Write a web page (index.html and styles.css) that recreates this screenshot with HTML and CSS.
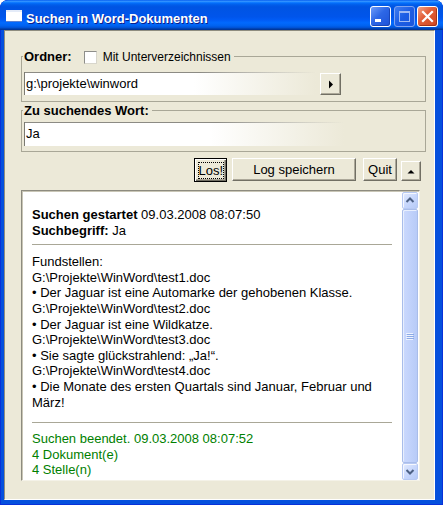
FILE: index.html
```html
<!DOCTYPE html>
<html lang="de">
<head>
<meta charset="utf-8">
<title>Suchen in Word-Dokumenten</title>
<link rel="stylesheet" href="styles.css">
</head>
<body>
<div class="window">
  <div class="titlebar">
    <span class="app-icon"></span>
    <span class="title">Suchen in Word-Dokumenten</span>
    <div class="caption-buttons">
      <span class="cap-btn cap-min"><svg width="19" height="19" viewBox="0 0 19 19"><rect x="4" y="12" width="6" height="3" fill="#fff"/></svg></span>
      <span class="cap-btn cap-max"><svg width="19" height="19" viewBox="0 0 19 19"><rect x="4.5" y="4.5" width="10" height="10" fill="none" stroke="#9fbaf3" stroke-width="1"/><rect x="4" y="4" width="11" height="2" fill="#9fbaf3"/></svg></span>
      <span class="cap-btn cap-close"><svg width="19" height="19" viewBox="0 0 19 19"><path d="M5 5 L14 14 M14 5 L5 14" stroke="#fff" stroke-width="2.2" stroke-linecap="square"/></svg></span>
    </div>
  </div>
  <div class="client">
    <fieldset class="group group-folder">
      <legend class="group-label"><span class="label-bold">Ordner:</span><span class="checkbox"></span><span class="check-label">Mit Unterverzeichnissen</span></legend>
      <div class="folder-row">
        <div class="field field-folder">g:\projekte\winword</div>
        <span class="btn btn-browse"><svg width="6" height="9" viewBox="0 0 6 9"><path d="M1 0.5 L5 4.5 L1 8.5 Z" fill="#000"/></svg></span>
      </div>
    </fieldset>
    <fieldset class="group group-word">
      <legend class="group-label"><span class="label-bold">Zu suchendes Wort:</span></legend>
      <div class="field field-word">Ja</div>
    </fieldset>
    <div class="actions">
      <span class="btn btn-go"><span class="focus">Los!</span></span>
      <span class="btn btn-save">Log speichern</span>
      <span class="btn btn-quit">Quit</span>
      <span class="btn btn-up"><svg width="8" height="5" viewBox="0 0 8 5"><path d="M0.5 4.5 L4 1 L7.5 4.5 Z" fill="#000"/></svg></span>
    </div>
    <div class="log">
      <div class="log-text">
        <div><b>Suchen gestartet</b> 09.03.2008 08:07:50</div>
        <div><b>Suchbegriff:</b> Ja</div>
        <div class="rule"></div>
        <div>Fundstellen:</div>
        <div>G:\Projekte\WinWord\test1.doc</div>
        <div>• Der Jaguar ist eine Automarke der gehobenen Klasse.</div>
        <div>G:\Projekte\WinWord\test2.doc</div>
        <div>• Der Jaguar ist eine Wildkatze.</div>
        <div>G:\Projekte\WinWord\test3.doc</div>
        <div>• Sie sagte glückstrahlend: „Ja!“.</div>
        <div>G:\Projekte\WinWord\test4.doc</div>
        <div>• Die Monate des ersten Quartals sind Januar, Februar und<br>März!</div>
        <div class="rule rule-end"></div>
        <div class="ok">Suchen beendet. 09.03.2008 08:07:52</div>
        <div class="ok">4 Dokument(e)</div>
        <div class="ok">4 Stelle(n)</div>
      </div>
      <div class="scrollbar">
        <span class="sb-btn"><svg width="14" height="15" viewBox="0 0 14 15"><path d="M3.5 9 L7 5.5 L10.5 9" fill="none" stroke="#4d6185" stroke-width="2"/></svg></span>
        <span class="sb-thumb"><svg width="8" height="8" viewBox="0 0 8 8"><path d="M0 1.5 H7 M0 3.5 H7 M0 5.5 H7 M0 7.5 H7" stroke="#eef3fe" stroke-width="1"/><path d="M1 2.5 H8 M1 4.5 H8 M1 6.5 H8" stroke="#8caae6" stroke-width="1"/></svg></span>
        <span class="sb-btn"><svg width="14" height="15" viewBox="0 0 14 15"><path d="M3.5 6 L7 9.5 L10.5 6" fill="none" stroke="#4d6185" stroke-width="2"/></svg></span>
      </div>
    </div>
  </div>
</div>
</body>
</html>
```

FILE: styles.css
```css
* { box-sizing: border-box; }

body {
  margin: 0;
  font-family: "Liberation Sans", Arial, sans-serif;
  font-size: 13px;
  color: #000;
  background: #fff;
}

.window {
  width: 443px;
  height: 505px;
  display: flex;
  flex-direction: column;
  background: #0550dd;
  box-shadow: inset 0 0 0 1px #0831d9;
  border-radius: 8px 8px 0 0;
  overflow: hidden;
}

.titlebar {
  height: 30px;
  flex: none;
  display: flex;
  align-items: flex-start;
  padding: 0 5px 0 6px;
  color: #fff;
  border-radius: 8px 8px 0 0;
  background: linear-gradient(to bottom,
    #0058ee 0%, #3593ff 4%, #288eff 6%, #127dff 8%, #036ffc 10%,
    #0262ee 14%, #0057e5 20%, #0054e3 24%, #0055eb 56%, #005bf5 66%,
    #026afe 76%, #0062ef 86%, #0052d6 92%, #0040ab 96%, #003092 100%);
}

.app-icon {
  width: 16px;
  height: 11px;
  margin-top: 10px;
  background: #fff;
  border-top: 2px solid #e4ebf8;
  box-shadow: 0 1px 0 #5b80d0;
}

.title {
  flex: 1;
  margin: 11px 0 0 4px;
  font-weight: bold;
  font-size: 13px;
  line-height: 16px;
  white-space: nowrap;
  text-shadow: 1px 1px 0 #0a1e8c;
}

.caption-buttons {
  display: flex;
  margin-top: 6px;
}

.cap-btn {
  width: 21px;
  height: 21px;
  border: 1px solid #fff;
  border-radius: 3px;
  display: flex;
  align-items: center;
  justify-content: center;
}

.cap-min {
  background: linear-gradient(135deg, #6d9cf9 0%, #2d67e6 45%, #1d52d8 100%);
  box-shadow: inset -1px -1px 0 #1a46b8;
}

.cap-max {
  margin-left: 3px;
  border-color: #7ea3f0;
  background: linear-gradient(135deg, #3f7cf0 0%, #1c5de4 50%, #1a56dc 100%);
}

.cap-close {
  margin-left: 2px;
  background: linear-gradient(135deg, #f3a386 0%, #e2603b 40%, #cf461f 100%);
  box-shadow: inset -1px -1px 0 #a8341a;
}

.client {
  width: 431px;
  height: 470px;
  margin-left: 4px;
  background: #ece9d8;
  border-top: 1px solid #8f8d80;
  border-left: 1px solid #8f8d80;
  border-right: 1px solid #fff;
  border-bottom: 1px solid #fff;
  padding: 18px 8px 0 16px;
}

.group {
  margin: 0;
  width: 405px;
  min-width: 0;
  border: 1px solid #a9a797;
  padding: 8px 0 6px 2px;
}

.group-label {
  padding: 0 3px 0 1px;
  margin-left: -1px;
  height: 15px;
  line-height: 15px;
  white-space: nowrap;
}

.label-bold {
  font-weight: bold;
  font-size: 13px;
}

.checkbox {
  display: inline-block;
  width: 13px;
  height: 13px;
  margin: 0 6px 0 12px;
  vertical-align: -3px;
  background: #fff;
  border: 1px solid #8e8e8a;
  border-right-color: #d8d6cc;
  border-bottom-color: #d8d6cc;
}

.check-label {
  font-size: 12px;
}

.folder-row {
  display: flex;
  align-items: flex-start;
}

.field {
  height: 23px;
  line-height: 23px;
  padding-left: 1px;
  font-size: 13px;
  white-space: nowrap;
  border-left: 1px solid #7b7a72;
  background:
    linear-gradient(to right, #8c8b84 0%, #8c8b84 60%, rgba(140, 139, 132, 0) 100%) left top / 100% 1px no-repeat,
    linear-gradient(to right, #fff 0%, #fff 58%, #ece9d8 100%);
}

.field-folder {
  width: 292px;
  margin-right: 4px;
}

.group-word {
  margin-top: 1px;
  padding: 4px 0 5px 2px;
}

.field-word {
  width: 320px;
  height: 24px;
  line-height: 24px;
}

.btn {
  display: flex;
  align-items: center;
  justify-content: center;
  height: 23px;
  font-size: 13px;
  background: #ece9d8;
  border: 1px solid;
  border-color: #fff #716f64 #716f64 #fff;
  box-shadow: inset -1px -1px 0 #aca899;
  white-space: nowrap;
}

.btn-browse {
  width: 21px;
  height: 22px;
  margin-top: 1px;
}

.actions {
  display: flex;
  justify-content: flex-end;
  align-items: flex-start;
  height: 24px;
  margin-top: 6px;
  padding-right: 5px;
}

.btn-go {
  width: 33px;
  height: 24px;
  border-color: #000;
  box-shadow: inset 1px 1px 0 #fff, inset -1px -1px 0 #716f64, inset -2px -2px 0 #aca899;
}

.focus {
  display: inline-block;
  width: 26px;
  height: 17px;
  line-height: 15px;
  text-align: center;
  border: 1px dotted #000;
}

.btn-save {
  width: 124px;
  margin-left: 5px;
}

.btn-quit {
  width: 34px;
  margin-left: 7px;
}

.btn-up {
  width: 20px;
  height: 20px;
  margin-left: 4px;
  margin-top: 3px;
}

.log {
  display: flex;
  width: 399px;
  height: 291px;
  margin-top: 8px;
  background: #fff;
  border: 1px solid;
  border-color: #8d8b7f #f4f2e8 #f4f2e8 #8d8b7f;
  box-shadow: inset 1px 1px 0 #c9c6b6;
}

.log-text {
  flex: 1;
  padding: 16px 0 0 10px;
  font-size: 13px;
  line-height: 15.6px;
  white-space: nowrap;
}

.rule {
  width: 360px;
  height: 1px;
  background: #a9a797;
  margin: 6px 0 9px;
}

.rule-end {
  margin: 12px 0 8px;
}

.ok {
  color: #008000;
}

.scrollbar {
  width: 16px;
  margin: 1px 1px 0 0;
  display: flex;
  flex-direction: column;
}

.sb-btn {
  flex: none;
  height: 17px;
  display: flex;
  align-items: center;
  justify-content: center;
  border: 1px solid #b7c9f3;
  border-radius: 2px;
  background: linear-gradient(135deg, #e3ebfe 0%, #c6d6fc 55%, #b6caf7 100%);
  box-shadow: inset 1px 1px 0 #f6f8fe;
}

.sb-thumb {
  flex: 1;
  display: flex;
  align-items: center;
  justify-content: center;
  border: 1px solid #a9bdea;
  border-radius: 2px;
  background: linear-gradient(to right, #cbd9fd 0%, #c1d2fb 50%, #b8cbf7 100%);
  box-shadow: inset 1px 1px 0 #e8effe;
}
```
